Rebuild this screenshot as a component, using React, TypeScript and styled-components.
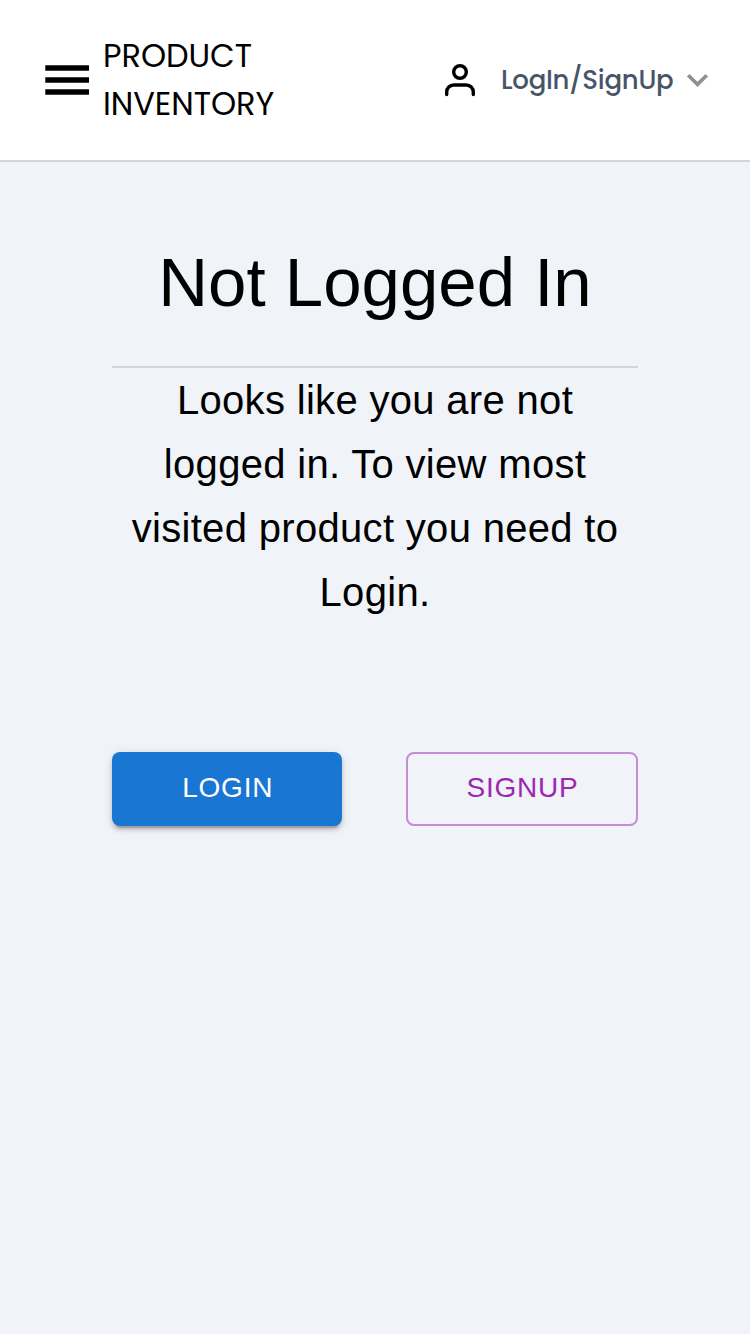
import React from "react";
import styled, { createGlobalStyle } from "styled-components";

const GlobalStyle = createGlobalStyle`
  * { box-sizing: border-box; }
  body { margin: 0; background: #f0f3f8; font-family: "Liberation Sans", Arial, sans-serif; color: #000; }
`;
const Page = styled.div`
  min-height: 1334px;
  background: #f0f3f8;
`;
const Header = styled.header`
  display: flex;
  justify-content: space-between;
  align-items: center;
  height: 162px;
  padding: 0 41px 0 43px;
  background: #fff;
  border-bottom: 2px solid #d3d5d9;
  font-family: Poppins, "Open Sans", sans-serif;
`;
const Brand = styled.div`
  display: flex;
  align-items: center;
  gap: 12px;
`;
const BrandName = styled.div`
  width: 172px;
  font-size: 32px;
  line-height: 48px;
  letter-spacing: -0.05px;
`;
const Account = styled.div`
  display: flex;
  align-items: center;
  color: #475569;
  font-size: 26px;
  font-weight: 500;
  line-height: 40px;
`;
const Label = styled.span`
  width: 174px;
  margin: 0 10px 0 25px;
  letter-spacing: -0.25px;
  white-space: nowrap;
`;
const Card = styled.main`
  width: 526px;
  margin: 0 auto;
  padding-top: 71px;
  text-align: center;
`;
const Title = styled.h1`
  margin: 0;
  height: 135px;
  font-size: 69px;
  font-weight: 400;
  line-height: 100px;
  border-bottom: 2px solid #d3d5d9;
`;
const Message = styled.p`
  margin: 0;
  font-size: 40px;
  line-height: 64px;
  letter-spacing: 0.32px;
`;
const Actions = styled.div`
  display: flex;
  justify-content: space-between;
  margin-top: 128px;
`;
const Button = styled.button<{ $filled?: boolean }>`
  width: ${(p) => (p.$filled ? 230.4 : 232)}px;
  height: 74px;
  padding: 0 0 2px 1px;
  border-radius: 8px;
  border: ${(p) => (p.$filled ? "0" : "2px solid rgba(156, 39, 176, 0.5)")};
  background: ${(p) => (p.$filled ? "#1976d2" : "transparent")};
  color: ${(p) => (p.$filled ? "#fff" : "#9c27b0")};
  box-shadow: ${(p) => (p.$filled ? "0 6px 2px -4px rgba(0,0,0,.2), 0 4px 4px rgba(0,0,0,.14), 0 2px 10px rgba(0,0,0,.12)" : "none")};
  font: 400 28px "Liberation Sans", Arial, sans-serif;
  letter-spacing: 0.8px;
`;

export default function App() {
  return (
    <Page>
      <GlobalStyle />
      <Header>
        <Brand>
          <svg width="48" height="48" viewBox="0 0 48 48" fill="none" stroke="#000" strokeWidth="5.3">
            <path d="M2.3 12H46M2.3 24H46M2.3 36H46" />
          </svg>
          <BrandName>PRODUCT INVENTORY</BrandName>
        </Brand>
        <Account>
          <svg width="32" height="34" viewBox="0 0 32 34" fill="none" stroke="#000" strokeWidth="3.4" strokeLinecap="round">
            <circle cx="16" cy="9" r="6.3" />
            <path d="M2.7 31.5V29A7 7 0 0 1 9.7 22H22.3A7 7 0 0 1 29.3 29V31.5" />
          </svg>
          <Label>LogIn/SignUp</Label>
          <svg width="24" height="16" viewBox="0 0 24 16" fill="none" stroke="#909090" strokeWidth="3.6">
            <path d="M3.2 3.3L12.5 12.4L21.8 3.3" />
          </svg>
        </Account>
      </Header>
      <Card>
        <Title>Not Logged In</Title>
        <Message>Looks like you are not logged in. To view most visited product you need to Login.</Message>
        <Actions>
          <Button $filled>LOGIN</Button>
          <Button>SIGNUP</Button>
        </Actions>
      </Card>
    </Page>
  );
}
